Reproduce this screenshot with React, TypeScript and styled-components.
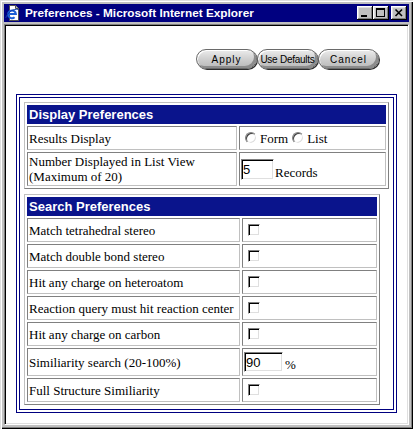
import { FC, Fragment } from 'react';
import styled, { createGlobalStyle } from 'styled-components';

const GlobalStyle = createGlobalStyle`
  html, body {
    margin: 0;
    padding: 0;
    background: #c0c0c0;
  }
  * {
    box-sizing: border-box;
  }
`;

const Window = styled.div`
  width: 413px;
  height: 429px;
  display: flex;
  flex-direction: column;
  padding: 4px;
  background: #c0c0c0;
  box-shadow: inset 1px 1px 0 #dfdfdf, inset 2px 2px 0 #fff,
    inset -1px -1px 0 #000, inset -2px -2px 0 #808080;
`;

const TitleBar = styled.div`
  height: 18px;
  display: flex;
  align-items: center;
  padding: 0 2px 0 1px;
  background: #000080;
`;

const Title = styled.span`
  flex: 1;
  margin-left: 4px;
  color: #fff;
  font-family: 'Liberation Sans', Arial, sans-serif;
  font-size: 11.8px;
  font-weight: bold;
  white-space: nowrap;
`;

const CaptionButton = styled.button<{ $gap?: number }>`
  width: 16px;
  height: 14px;
  margin-left: ${(p) => p.$gap ?? 0}px;
  padding: 0;
  border: none;
  display: flex;
  background: #c0c0c0;
  box-shadow: inset -1px -1px 0 #000, inset 1px 1px 0 #fff,
    inset -2px -2px 0 #808080, inset 2px 2px 0 #dfdfdf;
`;

const Client = styled.div`
  flex: 1;
  margin-top: 2px;
  display: flex;
  flex-direction: column;
  background: #fff;
  border: 1px solid;
  border-color: #808080 #fff #fff #808080;
  box-shadow: inset 1px 1px 0 #000, inset -1px -1px 0 #dfdfdf;
`;

const ButtonBar = styled.div`
  display: flex;
  justify-content: flex-end;
  padding: 24px 29px 0 0;
`;

const PillButton = styled.button<{ $spacing: number; $size: number }>`
  width: 61px;
  height: 20px;
  padding: 0;
  border: 1px solid #6a6a6a;
  border-radius: 10px;
  background: linear-gradient(#ececec, #d2d2d2 45%, #b8b8b8);
  box-shadow: inset 1px 1px 0 #fff, inset -2px -2px 0 #8c8c8c,
    1px 1px 0 #2c2c2c;
  color: #000;
  font-family: 'Liberation Sans', Arial, sans-serif;
  font-size: ${(p) => p.$size}px;
  letter-spacing: ${(p) => p.$spacing}px;
  white-space: nowrap;
`;

const OuterFrame = styled.div`
  margin: 25px 11px 0;
  padding: 2px;
  border: 1px solid #000080;
`;

const InnerFrame = styled.div`
  display: flex;
  flex-direction: column;
  gap: 5px;
  padding: 4px;
  border: 1px solid #000080;
`;

const PrefTable = styled.div<{ $cols: string; $rows: string }>`
  align-self: flex-start;
  display: grid;
  grid-template-columns: ${(p) => p.$cols};
  grid-template-rows: ${(p) => p.$rows};
  gap: 2px;
  padding: 2px;
  border: 1px solid;
  border-color: #c0c0c0 #808080 #808080 #c0c0c0;
`;

const HeaderCell = styled.div`
  grid-column: 1 / -1;
  display: flex;
  align-items: center;
  padding-left: 2px;
  background: #0a148c;
  color: #fff;
  font-family: 'Liberation Sans', Arial, sans-serif;
  font-size: 13px;
  font-weight: bold;
`;

const Cell = styled.div`
  display: flex;
  align-items: center;
  padding: 0 1px;
  border: 1px solid;
  border-color: #808080 #c0c0c0 #c0c0c0 #808080;
  color: #000;
  font-family: 'Liberation Serif', 'Times New Roman', serif;
  font-size: 13px;
  line-height: 15px;
`;

const Option = styled.label`
  display: inline-flex;
  align-items: center;
`;

const Radio = styled.input.attrs({ type: 'radio' })`
  appearance: none;
  width: 12px;
  height: 12px;
  margin: 0 3px 0 4px;
  border: 1px solid;
  border-color: #808080 #fff #fff #808080;
  border-radius: 50%;
  background: #fff;
  box-shadow: inset 1px 1px 0 #404040, inset -1px -1px 0 #dfdfdf;
`;

const Check = styled.input.attrs({ type: 'checkbox' })`
  appearance: none;
  width: 12px;
  height: 12px;
  margin: 0 0 0 4px;
  border: 1px solid;
  border-color: #808080 #fff #fff #808080;
  background: #fff;
  box-shadow: inset 1px 1px 0 #000, inset -1px -1px 0 #dfdfdf;
`;

const InputGroup = styled.div`
  display: flex;
  align-items: flex-end;
`;

const TextField = styled.input<{ $w: number; $h: number }>`
  width: ${(p) => p.$w}px;
  height: ${(p) => p.$h}px;
  margin: 0;
  padding: 0 0 0 1px;
  border: 1px solid;
  border-color: #808080 #fff #fff #808080;
  box-shadow: inset 1px 1px 0 #000, inset -1px -1px 0 #dfdfdf;
  background: #fff;
  color: #000;
  font-family: 'Liberation Sans', Arial, sans-serif;
  font-size: 13px;
  outline: none;
`;

const Suffix = styled.span<{ $gap: number }>`
  margin-left: ${(p) => p.$gap}px;
  padding-bottom: 1px;
  line-height: 13px;
`;

const IeIcon = () => (
  <svg width="16" height="16" viewBox="0 0 16 16">
    <path d="M4.5 0.5h6l3 3v12h-9z" fill="#fff" stroke="#505050" />
    <path d="M10.5 0.5v3h3" fill="#c0c0c0" stroke="#505050" />
    <path
      d="M9.6 12.3A3.9 3.9 0 1 1 10.9 9H3.3"
      fill="none"
      stroke="#1c5fd6"
      strokeWidth="2"
    />
    <path
      d="M0.8 13C2.4 7.5 8 3.6 13.2 4.3"
      fill="none"
      stroke="#0b3aa8"
      strokeWidth="1"
    />
  </svg>
);

const MinimizeGlyph = () => (
  <svg width="16" height="14" viewBox="0 0 16 14" shapeRendering="crispEdges">
    <rect x="4" y="9" width="6" height="2" fill="#000" />
  </svg>
);

const MaximizeGlyph = () => (
  <svg width="16" height="14" viewBox="0 0 16 14" shapeRendering="crispEdges">
    <path d="M3 2h9v9H3z M4 4v6h7V4z" fill="#000" fillRule="evenodd" />
  </svg>
);

const CloseGlyph = () => (
  <svg width="16" height="14" viewBox="0 0 16 14">
    <path d="M4.5 3.5L11 10M11 3.5L4.5 10" stroke="#000" strokeWidth="1.6" />
  </svg>
);

type SearchRow = { label: string; percent?: string };

const searchRows: SearchRow[] = [
  { label: 'Match tetrahedral stereo' },
  { label: 'Match double bond stereo' },
  { label: 'Hit any charge on heteroatom' },
  { label: 'Reaction query must hit reaction center' },
  { label: 'Hit any charge on carbon' },
  { label: 'Similiarity search (20-100%)', percent: '90' },
  { label: 'Full Structure Similiarity' },
];

const App: FC = () => {
  return (
    <>
      <GlobalStyle />
      <Window>
        <TitleBar>
          <IeIcon />
          <Title>Preferences - Microsoft Internet Explorer</Title>
          <CaptionButton aria-label="Minimize">
            <MinimizeGlyph />
          </CaptionButton>
          <CaptionButton aria-label="Maximize">
            <MaximizeGlyph />
          </CaptionButton>
          <CaptionButton aria-label="Close" $gap={2}>
            <CloseGlyph />
          </CaptionButton>
        </TitleBar>
        <Client>
          <ButtonBar>
            <PillButton $size={10} $spacing={1}>
              Apply
            </PillButton>
            <PillButton $size={10} $spacing={-0.25}>
              Use Defaults
            </PillButton>
            <PillButton $size={10} $spacing={1}>
              Cancel
            </PillButton>
          </ButtonBar>
          <OuterFrame>
            <InnerFrame>
              <PrefTable $cols="210px 147px" $rows="19px 24px 34px">
                <HeaderCell>Display Preferences</HeaderCell>
                <Cell>Results Display</Cell>
                <Cell>
                  <Option>
                    <Radio name="display" />
                    Form
                  </Option>
                  <Option>
                    <Radio name="display" />
                    List
                  </Option>
                </Cell>
                <Cell>
                  Number Displayed in List View
                  <br />
                  (Maximum of 20)
                </Cell>
                <Cell>
                  <InputGroup>
                    <TextField $w={33} $h={21} defaultValue="5" />
                    <Suffix $gap={1}>Records</Suffix>
                  </InputGroup>
                </Cell>
              </PrefTable>
              <PrefTable
                $cols="213px 135px"
                $rows="19px repeat(5, 24px) 28px 24px"
              >
                <HeaderCell>Search Preferences</HeaderCell>
                {searchRows.map((row) => (
                  <Fragment key={row.label}>
                    <Cell>{row.label}</Cell>
                    <Cell>
                      {row.percent ? (
                        <InputGroup>
                          <TextField $w={39} $h={20} defaultValue={row.percent} />
                          <Suffix $gap={2}>%</Suffix>
                        </InputGroup>
                      ) : (
                        <Check />
                      )}
                    </Cell>
                  </Fragment>
                ))}
              </PrefTable>
            </InnerFrame>
          </OuterFrame>
        </Client>
      </Window>
    </>
  );
};

export default App;
